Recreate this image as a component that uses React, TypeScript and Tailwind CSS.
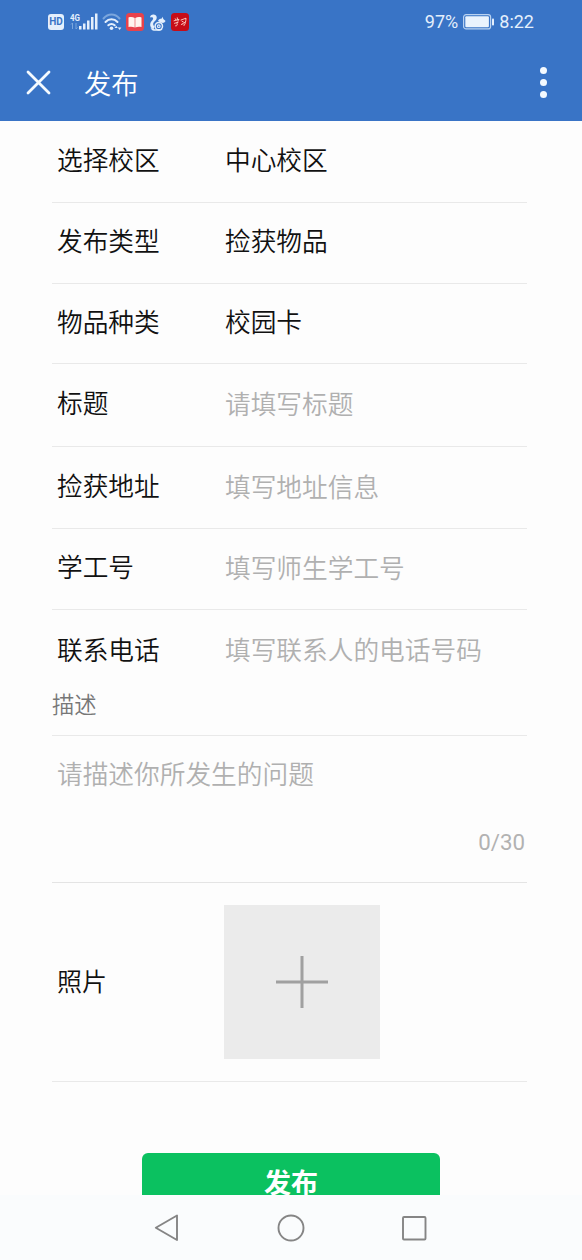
import React, { useState } from "react";
import clsx from "clsx";

type Field = {
  label: string;
  value?: string;
  placeholder?: string;
  height: string;
};

const fields: Field[] = [
  { label: "选择校区", value: "中心校区", height: "h-[82px]" },
  { label: "发布类型", value: "捡获物品", height: "h-[81px]" },
  { label: "物品种类", value: "校园卡", height: "h-[80px]" },
  { label: "标题", placeholder: "请填写标题", height: "h-[83px]" },
  { label: "捡获地址", placeholder: "填写地址信息", height: "h-[82px]" },
  { label: "学工号", placeholder: "填写师生学工号", height: "h-[81px]" },
  { label: "联系电话", placeholder: "填写联系人的电话号码", height: "h-[82px]" },
];

const SignalIcon = () => (
  <svg width="28" height="18" viewBox="0 0 28 18" fill="#e4effc">
    <text x="0" y="7.500" fontSize="9" fontWeight="700" fontFamily="Roboto, sans-serif" textLength="10" lengthAdjust="spacingAndGlyphs">
      4G
    </text>
    <path d="M2.500 10v6M1 11.500 2.500 10M6 10v6l1.500-1.500" stroke="#7ba6dd" strokeWidth="1" fill="none" />
    <rect x="9" y="13" width="2.500" height="3.500" />
    <rect x="13" y="10.500" width="2.500" height="6" />
    <rect x="17" y="7.500" width="2.500" height="9" />
    <rect x="21" y="4" width="2.500" height="12.500" />
    <rect x="25" y="0.500" width="2.500" height="16" />
  </svg>
);

const WifiIcon = () => (
  <svg width="20" height="18" viewBox="0 0 20 18" fill="none" strokeLinecap="round">
    <path d="M1.500 5.500C6 .3 13 .3 17.500 5.500" stroke="#7ba6dd" strokeWidth="2" />
    <path d="M3.500 9c3.400-3.700 8.600-3.700 12 0" stroke="#e4effc" strokeWidth="2" />
    <path d="M6.300 12.300c1.900-1.900 4.500-1.900 6.400 0" stroke="#e4effc" strokeWidth="2" />
    <circle cx="9.500" cy="15.300" r="1.800" fill="#e4effc" />
    <path d="M12.500 15l1.700-2.200 1.600 2.200zM15.800 14.500h3.600l-1.800 2.500z" fill="#e4effc" />
  </svg>
);

const BookIcon = () => (
  <svg width="18" height="18" viewBox="0 0 18 18">
    <rect width="18" height="18" rx="3.500" fill="#e8424b" />
    <path d="M2.500 4.500c2.500-.7 4.500-.4 6.200.5v9.500c-1.700-.8-3.700-1-6.200-.5zM15.500 4.500c-2.500-.7-4.500-.4-6.200.5v9.500c1.700-.8 3.700-1 6.200-.5z" fill="#fff5ee" />
  </svg>
);

const SquirrelIcon = () => (
  <svg width="17" height="17" viewBox="0 0 17 17" fill="none">
    {/* tail */}
    <path
      d="M1 3.600C1 1.200 3 .3 4.800.5 7.300.8 8.300 3 7.500 5 6.800 6.800 4.600 7.600 4.200 9.500c-.2 1.200.3 2.300 1.300 2.800L4.500 15.500C2.300 14.500.8 12.400 1.200 10c.4-2.400 2.600-3.600 2.900-5.200.2-1.100-.6-1.700-1.500-1.600C2 3.200 1.500 3.400 1 3.600z"
      fill="#e4effc"
    />
    {/* head and belly */}
    <path d="M9 6.600c1-1.500 2.400-2.200 3.800-2.100l.9-1.700.6 2.100 2.300 2.200-1.300 1.500c-1 .5-1.900.4-2.600.2-1.300-.4-2.600-.8-3.700-2.200z" fill="#e4effc" />
    <circle cx="9.800" cy="12.200" r="3.700" stroke="#e4effc" strokeWidth="1.500" />
    <circle cx="9.800" cy="12.200" r="1.300" stroke="#e4effc" strokeWidth="1.200" />
    <path d="M1.500 13.500c1.500 1.500 4 2 5.500 1.500h6.500c-.5 1.300-1.500 1.700-2.500 1.700H5c-1.800 0-3-1.400-3.500-3.200z" fill="#e4effc" />
  </svg>
);

const XuexiIcon = () => (
  <svg width="18" height="18" viewBox="0 0 18 18">
    <rect width="18" height="18" rx="3.500" fill="#c70c17" />
    <path
      d="M3 7.800l5-1.500-1.200 1.700M4.300 5.800l.7 1.200M6.300 4.800l.2 1.500M3.500 10.300l3.800-1.200-1.500 1.400c1 1.300.3 2.500-1.200 2.400M10 7l5-1.800c-.1 3.300-.8 5.800-2 7.300l-.8-.8M11 8.300l1.300.6M10.300 11.500l3.700-2.300"
      stroke="#ffd5c8"
      strokeWidth="0.900"
      strokeLinecap="round"
      fill="none"
    />
  </svg>
);

const StatusBar = () => (
  <div className="flex h-[44px] items-center justify-between pl-12 pr-[48px] text-[#e4effc]">
    <div className="flex items-center">
      <span className="flex h-4 w-4 items-center justify-center rounded-[3px] bg-[#e4effc] text-[10px] font-bold leading-none text-[#3974c6]">
        HD
      </span>
      <span className="ml-[6px]">
        <SignalIcon />
      </span>
      <span className="ml-[4px]">
        <WifiIcon />
      </span>
      <span className="ml-[4px]">
        <BookIcon />
      </span>
      <span className="ml-[5px]">
        <SquirrelIcon />
      </span>
      <span className="ml-[5px]">
        <XuexiIcon />
      </span>
    </div>
    <div className="flex items-center text-[18px] leading-none">
      <span>97%</span>
      <svg className="ml-[5px]" width="32" height="16" viewBox="0 0 32 16">
        <rect x="0.600" y="0.600" width="27" height="14.300" rx="2.500" fill="none" stroke="#b9d2f1" strokeWidth="1.200" />
        <rect x="2.300" y="2.300" width="23.600" height="10.900" rx="1" fill="#eaf3fd" />
        <rect x="29" y="4.500" width="2" height="7" rx="0.800" fill="#e4effc" />
      </svg>
      <span className="ml-[4px]">8:22</span>
    </div>
  </div>
);

const Header = () => (
  <header className="h-[121px] bg-[#3974c6] text-white">
    <StatusBar />
    <div className="flex h-[77px] items-center justify-between pl-[26px] pr-[35px]">
      <div className="flex items-center">
        <svg width="25" height="25" viewBox="0 0 25 25" fill="none" stroke="#f4faff" strokeWidth="2.800" strokeLinecap="round">
          <path d="M2 2l21 21M23 2L2 23" />
        </svg>
        <h1 className="ml-[33px] pt-[6px] text-[27.300px] font-[350] leading-none">发布</h1>
      </div>
      <div className="flex flex-col gap-[5px]">
        <span className="h-[7px] w-[7px] rounded-full bg-[#f4faff]" />
        <span className="h-[7px] w-[7px] rounded-full bg-[#f4faff]" />
        <span className="h-[7px] w-[7px] rounded-full bg-[#f4faff]" />
      </div>
    </div>
  </header>
);

const FormRow = ({ field, last }: { field: Field; last: boolean }) => (
  <div
    className={clsx(
      "flex items-center pl-[5px] text-[25.700px] font-[350] leading-none",
      field.height,
      last ? "pt-[2px]" : "border-b border-[#e9e9e9]"
    )}
  >
    <span className="w-[168px] text-[#111]">{field.label}</span>
    <span className={clsx(field.value ? "text-[#111]" : "text-[#b0b0b0]", field.placeholder && !last && "pt-[2px]")}>
      {field.value ?? field.placeholder}
    </span>
  </div>
);

const NavBar = () => (
  <nav className="flex h-[65px] items-center justify-center bg-[#fafcfd]">
    <svg width="274" height="28" viewBox="0 0 274 28" fill="none" stroke="#858585" strokeWidth="1.900" strokeLinejoin="round">
      <path d="M23 1.500v24.500L1.800 13.700z" />
      <circle cx="137" cy="14" r="12.500" />
      <rect x="249" y="3" width="22.500" height="22.500" rx="1" />
    </svg>
  </nav>
);

const App = () => {
  const [description] = useState("");

  return (
    <div className="flex h-[1260px] w-[582px] flex-col overflow-hidden bg-[#fdfdfd] font-[Roboto,'Noto_Sans_CJK_SC',sans-serif]">
      <Header />

      <main className="h-[1074px] overflow-hidden pl-[52px] pr-[55px]">
        {fields.map((field, index) => (
          <FormRow key={field.label} field={field} last={index === fields.length - 1} />
        ))}

        {/* Description */}
        <div className="h-[44px] border-b border-[#e9e9e9] text-[22.300px] font-[350] leading-[26px] text-[#777]">
          描述
        </div>
        <div className="flex h-[147px] flex-col justify-between border-b border-[#e4e4e4] pb-[26px] pl-[5px] pt-[25px] text-[#b2b2b2]">
          <p className="text-[25.700px] font-[350] leading-[28px] text-[#b0b0b0]">
            {description || "请描述你所发生的问题"}
          </p>
          <p className="pr-[2px] text-right text-[22.300px] leading-[28px]">{description.length}/30</p>
        </div>

        {/* Photo upload */}
        <div className="flex h-[199px] items-center border-b border-[#e9e9e9] pl-[5px]">
          <span className="w-[167px] text-[25px] font-[350] leading-none text-[#111]">照片</span>
          <div className="flex h-[154px] w-[156px] items-center justify-center bg-[#ebebeb]">
            <svg width="52" height="52" viewBox="0 0 52 52" stroke="#a0a0a0" strokeWidth="3">
              <path d="M26 0v52M0 26h52" />
            </svg>
          </div>
        </div>

        <button className="ml-[90px] mt-[71px] flex h-[62px] w-[298px] items-center justify-center rounded-[6px] bg-[#0bc160] text-[27px] font-bold leading-none text-white">
          发布
        </button>
      </main>

      <NavBar />
    </div>
  );
};

export default App;
